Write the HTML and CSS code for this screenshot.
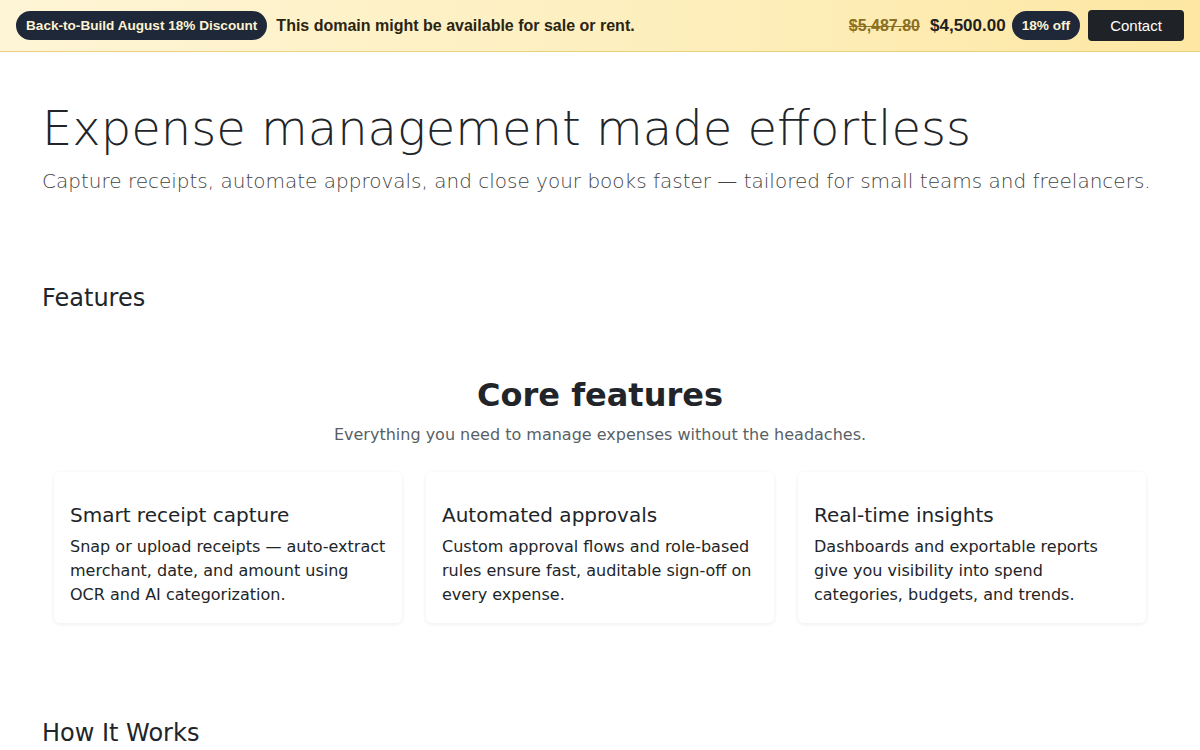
FILE: index.html
```html
<!DOCTYPE html>
<html lang="en">
<head>
<meta charset="utf-8">
<title>Expense management made effortless</title>
<link rel="stylesheet" href="styles.css">
</head>
<body>
<div class="promo">
  <div class="promo-left">
    <span class="pill">Back-to-Build August 18% Discount</span>
    <span class="promo-msg">This domain might be available for sale or rent.</span>
  </div>
  <div class="promo-right">
    <span class="old-price">$5,487.80</span>
    <span class="new-price">$4,500.00</span>
    <span class="pill pill-off">18% off</span>
    <a class="contact" href="#">Contact</a>
  </div>
</div>

<main class="container">
  <section class="hero">
    <h1 class="display">Expense management made effortless</h1>
    <p class="lead">Capture receipts, automate approvals, and close your books faster — tailored for small teams and freelancers.</p>
  </section>

  <section class="section">
    <h2 class="section-title">Features</h2>
    <div class="inner">
      <h3 class="core-title">Core features</h3>
      <p class="core-sub">Everything you need to manage expenses without the headaches.</p>
      <div class="cards">
        <div class="card">
          <h5 class="card-title">Smart receipt capture</h5>
          <p class="card-text">Snap or upload receipts — auto-extract merchant, date, and amount using OCR and AI categorization.</p>
        </div>
        <div class="card">
          <h5 class="card-title">Automated approvals</h5>
          <p class="card-text">Custom approval flows and role-based rules ensure fast, auditable sign-off on every expense.</p>
        </div>
        <div class="card">
          <h5 class="card-title">Real-time insights</h5>
          <p class="card-text">Dashboards and exportable reports give you visibility into spend categories, budgets, and trends.</p>
        </div>
      </div>
    </div>
  </section>

  <section class="section how">
    <h2 class="section-title">How It Works</h2>
  </section>
</main>
</body>
</html>
```

FILE: styles.css
```css
* { box-sizing: border-box; }
html, body { margin: 0; padding: 0; }
body {
  font-family: "DejaVu Sans", sans-serif;
  color: #212529;
  background: #fff;
  font-size: 16px;
  line-height: 1.5;
}

.promo {
  display: flex;
  justify-content: space-between;
  align-items: center;
  height: 52px;
  padding: 0 16px;
  background: linear-gradient(90deg, #fef5d6 0%, #fdeebb 60%, #fde7a3 100%);
  border-bottom: 1px solid #ecd27a;
  font-family: "Liberation Sans", Arial, sans-serif;
}
.promo-left, .promo-right {
  display: flex;
  align-items: center;
}
.pill {
  display: inline-block;
  background: #1e2838;
  color: #fdf3d2;
  font-weight: 700;
  font-size: 13.6px;
  line-height: 17px;
  padding: 6px 10px;
  border-radius: 15px;
}
.promo-msg {
  margin-left: 9px;
  font-weight: 700;
  font-size: 16px;
  color: #2a2412;
}
.old-price {
  font-weight: 700;
  font-size: 16px;
  color: #8b6f22;
  text-decoration: line-through;
}
.new-price {
  margin-left: 10px;
  font-weight: 700;
  font-size: 17px;
  color: #1f1f1f;
}
.pill-off {
  margin-left: 6px;
  padding: 6px 10px;
}
.contact {
  margin-left: 8px;
  display: inline-block;
  width: 96px;
  height: 31px;
  line-height: 31px;
  text-align: center;
  background: #1f2227;
  color: #fff;
  text-decoration: none;
  font-size: 15px;
  border-radius: 4px;
}

.container {
  max-width: 1140px;
  margin: 0 auto;
  padding: 0 12px;
}

.hero {
  padding-top: 48px;
}
.display {
  margin: 0 0 8px;
  font-size: 48px;
  font-weight: 200;
  line-height: 1.2;
  color: #212529;
}
.lead {
  margin: 0;
  font-size: 20px;
  font-weight: 200;
  line-height: 1.5;
  color: #444;
}

.section-title {
  margin: 0;
  font-size: 24px;
  font-weight: 400;
  line-height: 1.2;
  color: #212529;
}
.section { padding-top: 88px; }
.how { padding-top: 96px; }

.inner {
  padding: 0 12px;
  margin-top: 64px;
}
.core-title {
  margin: 0;
  text-align: center;
  font-size: 32px;
  font-weight: 700;
  line-height: 1.2;
}
.core-sub {
  margin: 8px 0 0;
  text-align: center;
  color: #595f66;
  font-size: 16px;
}
.cards {
  display: grid;
  grid-template-columns: repeat(3, 1fr);
  gap: 24px;
  margin-top: 25px;
}
.card {
  background: #fff;
  border-radius: 6px;
  box-shadow: 0 1px 4px rgba(0,0,0,0.08);
  padding: 31px 16px 16px;
}
.card-title {
  margin: 0 0 8px;
  font-size: 20px;
  font-weight: 400;
  line-height: 1.2;
}
.card-text {
  margin: 0;
  font-size: 16px;
  line-height: 24px;
}
```
